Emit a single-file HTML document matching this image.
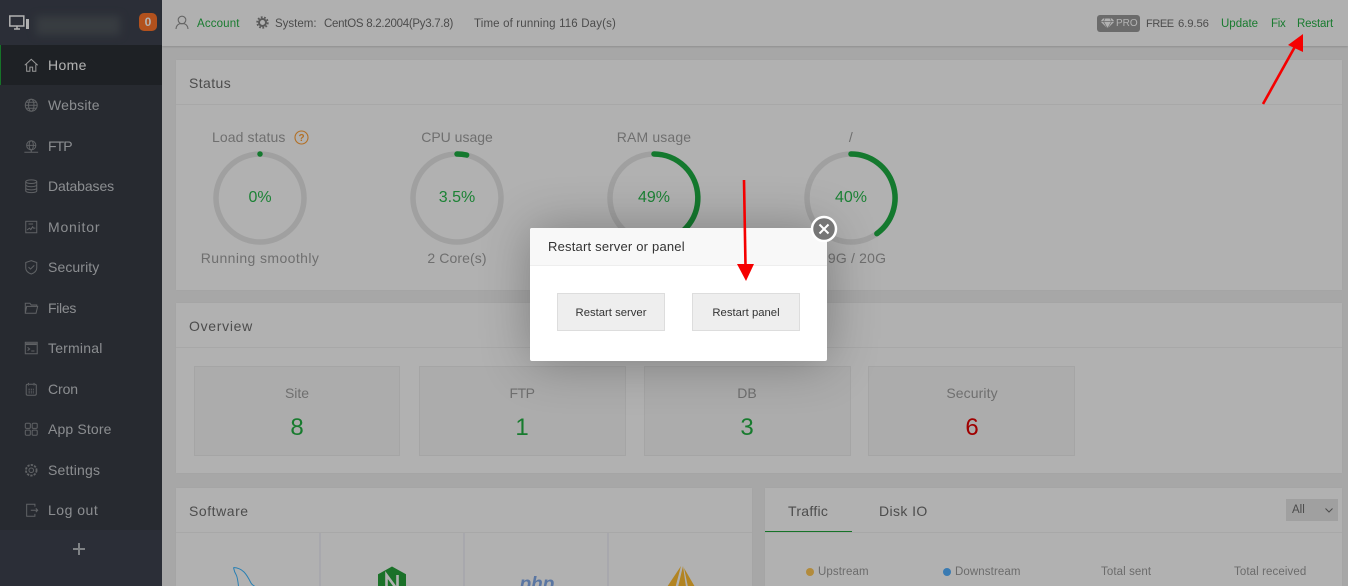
<!DOCTYPE html>
<html lang="en"><head><meta charset="utf-8"><title>Panel</title>
<style>
html,body{margin:0;padding:0;width:1348px;height:586px;overflow:hidden;background:#f0f0f0;font-family:"Liberation Sans","Noto Sans CJK SC",sans-serif}
#root{position:relative;width:1348px;height:586px;overflow:hidden;background:#f0f0f0}
.a{position:absolute}
.t{position:absolute;white-space:nowrap;line-height:20px;transform:translateY(-10px)}
.c{transform:translate(-50%,-10px);text-align:center}
.side{left:0;top:0;width:162px;height:586px;background:#383d46}
.nav{left:48px;font-size:14px;color:#c8cbcf;letter-spacing:.35px}
.ic{position:absolute;left:23px;width:16.5px;height:16.5px;fill:none;stroke:#8a8d91;stroke-width:1.1}
.bar{left:162px;top:0;width:1186px;height:46px;background:#fdfdfd;box-shadow:0 1px 2px rgba(0,0,0,.15)}
.s12{font-size:11.5px;color:#6d6d6d;letter-spacing:.15px}
.g{color:#26b045}
.panel{background:#fefefe;box-shadow:0 0 1px rgba(0,0,0,.08)}
.line{height:1px;background:#f1f1f1}
.h{font-size:14px;color:#6e6e6e;letter-spacing:.4px}
.lab{font-size:14px;color:#9f9f9f;letter-spacing:.4px}
.pct{font-size:16px;color:#29ba4d}
.card{top:366px;height:90px;background:#f6f6f6;border:1px solid #ececec;box-sizing:border-box}
.num{font-size:24px;color:#22b042;font-family:"Liberation Sans",sans-serif}
.leg{font-size:11.5px;color:#9a9a9a;letter-spacing:.1px}
.btn{top:293px;width:108px;height:38px;background:#eee;border:1px solid #ddd;box-sizing:border-box;font-size:11.3px;color:#333;text-align:center;line-height:38px}
</style></head><body><div id="root">

<div class="a side"></div>
<div class="a" style="left:0;top:0;width:162px;height:45px;background:#3e434f"></div>
<div class="a" style="left:0;top:530px;width:162px;height:56px;background:#3e434f"></div>
<div class="a" style="left:0;top:45px;width:162px;height:40px;background:#2c3036"></div>
<div class="a" style="left:0;top:45px;width:1px;height:40px;background:#20a53a"></div>

<svg class="a" style="left:8px;top:14px" width="22" height="18" viewBox="0 0 22 18" fill="none" stroke="#ffffff" stroke-width="1.5"><rect x="1.800" y="2" width="14" height="10"/><path d="M6 15h6M9 12v3"/><rect x="18" y="5" width="3" height="10" fill="#ffffff" stroke="none"/></svg>
<div class="a" style="left:36px;top:16px;width:84px;height:19px;background:#50565d;filter:blur(4px)"></div>
<div class="a" style="left:139px;top:13px;width:18px;height:18px;border-radius:5px;background:#ff742a;color:#ffffff;font-size:12px;font-weight:bold;text-align:center;line-height:18px">0</div>

<svg class="ic" style="top:57px;stroke:#dcdcdc" viewBox="0 0 18 18"><path d="M2 9l7-6.500L16 9M4 8v7.500h3.500V11h3v4.500H14V8"/></svg>
<svg class="ic" style="top:97px" viewBox="0 0 18 18"><circle cx="9" cy="9" r="6.500"/><ellipse cx="9" cy="9" rx="3" ry="6.500"/><path d="M2.500 9h13M3.500 5.700h11M3.500 12.300h11"/></svg>
<svg class="ic" style="top:138px" viewBox="0 0 18 18"><circle cx="9" cy="8" r="5"/><ellipse cx="9" cy="8" rx="2.300" ry="5"/><path d="M4 8h10M9 13v2M1.500 15.500h15"/></svg>
<svg class="ic" style="top:178px" viewBox="0 0 18 18"><ellipse cx="9" cy="4" rx="6" ry="2"/><path d="M3 4v10c0 1.100 2.700 2 6 2s6-.9 6-2V4M3 7.500c0 1.100 2.700 2 6 2s6-.9 6-2M3 11c0 1.100 2.700 2 6 2s6-.9 6-2"/></svg>
<svg class="ic" style="top:219px" viewBox="0 0 18 18"><rect x="3" y="2.500" width="12" height="12.500"/><path d="M4.500 12l2.500-2 1.500 1.500 2-3 1 1.500h2M6 5.500h5"/></svg>
<svg class="ic" style="top:259px" viewBox="0 0 18 18"><path d="M9 1.800l6 2v6c0 3.200-2.800 5.400-6 6.600-3.200-1.200-6-3.400-6-6.600v-6z"/><path d="M6 8.800l2.200 2.200L12.300 7"/></svg>
<svg class="ic" style="top:300px" viewBox="0 0 18 18"><path d="M2.500 14.500v-11h5l1.500 2h6v1.500M2.500 14.500l1.500-7.500h12l-1.800 7.500z"/></svg>
<svg class="ic" style="top:340px" viewBox="0 0 18 18"><rect x="2.500" y="2.500" width="13" height="12.500"/><path d="M3 4.500h12" stroke-width="2"/><path d="M5 8l2.200 1.800L5 11.500M9 12h3.500"/></svg>
<svg class="ic" style="top:381px" viewBox="0 0 18 18"><rect x="3.500" y="3.500" width="11" height="12" rx="1.500"/><path d="M6 2v3M12 2v3M6 9h6M6 11h6M6 13h6" stroke-dasharray="1.500 1"/></svg>
<svg class="ic" style="top:421px" viewBox="0 0 18 18"><rect x="2.500" y="2.500" width="5.500" height="5.500" rx="1.200"/><rect x="10" y="2.500" width="5.500" height="5.500" rx="1.200"/><rect x="2.500" y="10" width="5.500" height="5.500" rx="1.200"/><rect x="10" y="10" width="5.500" height="5.500" rx="1.200"/></svg>
<svg class="ic" style="top:462px" viewBox="0 0 18 18"><circle cx="9" cy="9" r="2.500"/><circle cx="9" cy="9" r="5.800" stroke-dasharray="2.500 1.300" stroke-width="2"/></svg>
<svg class="ic" style="top:502px" viewBox="0 0 18 18"><path d="M13 5V2.500H4v13h9V13M8.500 9H16M14 7l2 2-2 2"/></svg>

<div class="t nav" style="top:65px;color:#ffffff">Home</div>
<div class="t nav" style="top:105px;letter-spacing:.2px">Website</div>
<div class="t nav" style="top:146px;letter-spacing:-.9px">FTP</div>
<div class="t nav" style="top:186px;letter-spacing:-.1px">Databases</div>
<div class="t nav" style="top:227px;letter-spacing:.8px">Monitor</div>
<div class="t nav" style="top:267px;letter-spacing:.1px">Security</div>
<div class="t nav" style="top:308px;letter-spacing:-.3px">Files</div>
<div class="t nav" style="top:348px;letter-spacing:.2px">Terminal</div>
<div class="t nav" style="top:389px;letter-spacing:-.1px">Cron</div>
<div class="t nav" style="top:429px;letter-spacing:.15px">App Store</div>
<div class="t nav" style="top:470px;letter-spacing:.2px">Settings</div>
<div class="t nav" style="top:510px;letter-spacing:.5px">Log out</div>
<div class="a" style="left:73px;top:548px;width:12px;height:2px;background:#b7babf"></div>
<div class="a" style="left:78px;top:543px;width:2px;height:12px;background:#b7babf"></div>

<div class="a bar"></div>
<svg class="a" style="left:175px;top:15px" width="14" height="15" viewBox="0 0 14 15" fill="none" stroke="#919191" stroke-width="1.100"><circle cx="7" cy="5" r="3.800"/><path d="M1 14c.3-3.500 2.500-5.500 6-5.500s5.700 2 6 5.500"/></svg>
<div class="t s12 g" style="left:197px;top:24px">Account</div>
<svg class="a" style="left:256px;top:16px" width="13" height="13" viewBox="0 0 13 13"><circle cx="6.500" cy="6.500" r="3.500" fill="none" stroke="#818181" stroke-width="2"/><circle cx="6.500" cy="6.500" r="5.300" fill="none" stroke="#818181" stroke-width="1.800" stroke-dasharray="1.800 1.500"/></svg>
<div class="t s12" style="left:275px;top:24px;letter-spacing:0">System:</div>
<div class="t s12" style="left:324px;top:24px;letter-spacing:-.27px">CentOS 8.2.2004(Py3.7.8)</div>
<div class="t s12" style="left:474px;top:24px">Time of running 116 Day(s)</div>
<div class="a" style="left:1097px;top:15px;width:43px;height:17px;background:#9a9a9a;border-radius:3px"></div>
<svg class="a" style="left:1100px;top:18px" width="15" height="11" viewBox="0 0 15 11"><path d="M3 .5h9l2.500 3L7.500 10.500.5 3.500z" fill="#ffffff"/><path d="M.5 3.500h14M5 .5l-1.500 3 4 7 4-7-1.500-3" fill="none" stroke="#9a9a9a" stroke-width=".7"/></svg>
<div class="t" style="left:1116px;top:24px;font-size:10px;color:#ffffff">PRO</div>
<div class="t s12" style="left:1146px;top:24px;letter-spacing:-.4px;font-size:11px">FREE</div>
<div class="t s12" style="left:1178px;top:24px;letter-spacing:-.1px;font-size:11.3px">6.9.56</div>
<div class="t s12 g" style="left:1221px;top:24px;letter-spacing:0">Update</div>
<div class="t s12 g" style="left:1271px;top:24px;letter-spacing:-.3px">Fix</div>
<div class="t s12 g" style="left:1297px;top:24px;letter-spacing:-.15px">Restart</div>

<div class="a panel" style="left:176px;top:60px;width:1166px;height:230px"></div>
<div class="a line" style="left:176px;top:104px;width:1166px"></div>
<div class="t h" style="left:189px;top:83px">Status</div>

<div class="t lab" style="left:212px;top:137px;letter-spacing:.1px">Load status</div>
<svg class="a" style="left:294px;top:130px" width="15" height="15" viewBox="0 0 15 15"><circle cx="7.500" cy="7.500" r="6.500" fill="none" stroke="#ff9f34" stroke-width="1.100"/><text x="7.500" y="11" font-size="10" font-weight="bold" text-anchor="middle" fill="#ff9f34" font-family="Liberation Sans">?</text></svg>
<div class="t lab c" style="left:457px;top:137px;letter-spacing:0">CPU usage</div>
<div class="t lab c" style="left:654px;top:137px;letter-spacing:.15px">RAM usage</div>
<div class="t lab c" style="left:851px;top:137px">/</div>

<svg class="a" style="left:176px;top:130px" width="760" height="135" viewBox="176 130 760 135" fill="none" stroke-width="5.500" stroke-linecap="round">
<g stroke="#e5e5e5"><circle cx="260" cy="198" r="44"/><circle cx="457" cy="198" r="44"/><circle cx="654" cy="198" r="44"/><circle cx="851" cy="198" r="44"/></g>
<g stroke="#1dae42">
<path d="M260 154v.01"/>
<path d="M457 154A44 44 0 0 1 466.600 155"/>
<path d="M654 154A44 44 0 0 1 656.800 241.900"/>
<path d="M851 154A44 44 0 0 1 876.900 233.600"/>
</g></svg>
<div class="t pct c" style="left:260px;top:198px">0%</div>
<div class="t pct c" style="left:457px;top:198px">3.5%</div>
<div class="t pct c" style="left:654px;top:198px">49%</div>
<div class="t pct c" style="left:851px;top:198px">40%</div>
<div class="t lab c" style="left:260px;top:258px">Running smoothly</div>
<div class="t lab c" style="left:457px;top:258px;letter-spacing:.1px">2 Core(s)</div>
<div class="t lab c" style="left:851px;top:258px;letter-spacing:.2px">7.9G / 20G</div>

<div class="a panel" style="left:176px;top:303px;width:1166px;height:170px"></div>
<div class="a line" style="left:176px;top:347px;width:1166px"></div>
<div class="t h" style="left:189px;top:326px;letter-spacing:.7px">Overview</div>
<div class="a card" style="left:194px;width:206px"></div>
<div class="a card" style="left:419px;width:207px"></div>
<div class="a card" style="left:644px;width:207px"></div>
<div class="a card" style="left:868px;width:207px"></div>
<div class="t lab c" style="left:297px;top:393px;letter-spacing:0">Site</div>
<div class="t lab c" style="left:522px;top:393px;letter-spacing:-.5px">FTP</div>
<div class="t lab c" style="left:747px;top:393px;letter-spacing:0">DB</div>
<div class="t lab c" style="left:972px;top:393px;letter-spacing:.1px">Security</div>
<div class="t num c" style="left:297px;top:428px">8</div>
<div class="t num c" style="left:522px;top:428px">1</div>
<div class="t num c" style="left:747px;top:428px">3</div>
<div class="t num c" style="left:972px;top:428px;color:#e50000">6</div>

<div class="a panel" style="left:176px;top:488px;width:576px;height:98px"></div>
<div class="a line" style="left:176px;top:532px;width:576px"></div>
<div class="t h" style="left:189px;top:511px;letter-spacing:.55px">Software</div>
<div class="a" style="left:319px;top:533px;width:2px;height:53px;background:#f1f1f8"></div>
<div class="a" style="left:463px;top:533px;width:2px;height:53px;background:#f1f1f8"></div>
<div class="a" style="left:607px;top:533px;width:2px;height:53px;background:#f1f1f8"></div>

<svg class="a" style="left:176px;top:560px" width="576" height="26" viewBox="176 560 576 26">
<path d="M233.500 567.500c4 .2 7.500 1.500 10.500 4.500 3 3 5 7 7 11 1 2 3 3 5 4M233.500 567.500c.5 3 1.500 5.500 3 8 1 2.500 1.500 6 2 11" fill="none" stroke="#3cb7ff" stroke-width="1"/>
<path d="M392 566.500l14 7.800V590h-28v-15.700z" fill="#27a33b"/>
<path d="M386.500 590v-15l11 15v-15" fill="none" stroke="#fdfdfd" stroke-width="2.600"/>
<text x="537" y="590" font-family="Liberation Sans" font-size="19" font-weight="bold" font-style="italic" text-anchor="middle" fill="#82a9e9">php</text>
<path d="M681 566l-5.500 21H667zM683 566l3 21h-8zM684 568l11 19h-7z" fill="#ffbe31"/>
</svg>

<div class="a panel" style="left:765px;top:488px;width:577px;height:98px"></div>
<div class="a line" style="left:765px;top:532px;width:577px"></div>
<div class="a" style="left:765px;top:531px;width:87px;height:1px;background:#20a53a"></div>
<div class="t h" style="left:788px;top:511px;letter-spacing:.3px">Traffic</div>
<div class="t h" style="left:879px;top:511px">Disk IO</div>
<div class="a" style="left:1286px;top:499px;width:52px;height:22px;background:#e5e5e5"></div>
<div class="t" style="left:1292px;top:510px;font-size:11.5px;color:#6d6d6d">All</div>
<svg class="a" style="left:1324px;top:507px" width="10" height="7" viewBox="0 0 10 7"><path d="M1.500 1.500L5 5l3.500-3.500" fill="none" stroke="#6d6d6d" stroke-width="1"/></svg>
<div class="a" style="left:806px;top:568px;width:8px;height:8px;border-radius:50%;background:#ffc757"></div>
<div class="a" style="left:943px;top:568px;width:8px;height:8px;border-radius:50%;background:#53b0ff"></div>
<div class="t leg" style="left:818px;top:572px">Upstream</div>
<div class="t leg" style="left:955px;top:572px">Downstream</div>
<div class="t leg" style="left:1101px;top:572px">Total sent</div>
<div class="t leg" style="left:1234px;top:572px">Total received</div>

<div class="a" style="left:0;top:0;width:1348px;height:586px;background:rgba(0,0,0,.3)"></div>

<div class="a" style="left:530px;top:228px;width:297px;height:133px;background:#fff;border-radius:2px;box-shadow:1px 1px 50px rgba(0,0,0,.3)"></div>
<div class="a" style="left:530px;top:228px;width:297px;height:37px;background:#f8f8f8;border-bottom:1px solid #eee;border-radius:2px 2px 0 0"></div>
<div class="t" style="left:548px;top:247px;font-size:13px;color:#333;letter-spacing:.2px">Restart server or panel</div>
<div class="a btn" style="left:557px">Restart server</div>
<div class="a btn" style="left:692px">Restart panel</div>
<svg class="a" style="left:810px;top:215px" width="28" height="28" viewBox="0 0 28 28"><circle cx="14" cy="14" r="12" fill="#767676" stroke="#fff" stroke-width="2.500"/><path d="M9.500 9.500l9 9M18.500 9.500l-9 9" stroke="#fff" stroke-width="2"/></svg>

<svg class="a" style="left:0;top:0;pointer-events:none" width="1348" height="586" viewBox="0 0 1348 586">
<path d="M1263 104L1297 43" stroke="#f50000" stroke-width="2.600" fill="none"/>
<path d="M1303 34L1288 45L1303 52z" fill="#f50000"/>
<path d="M744 180L745.500 266" stroke="#f50000" stroke-width="2.600" fill="none"/>
<path d="M746 281L737 264H754z" fill="#f50000"/>
</svg>
</div></body></html>
